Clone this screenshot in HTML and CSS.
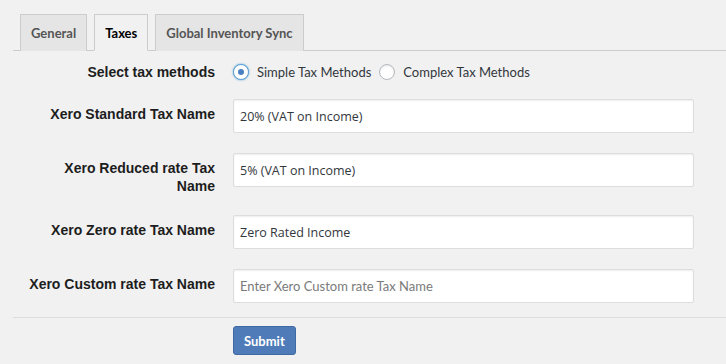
FILE: index.html
```html
<!DOCTYPE html>
<html lang="en">
<head>
    <meta charset="UTF-8">
    <title>Xero Settings - Taxes</title>
    <link rel="stylesheet" href="styles.css">
</head>
<body>
    <div class="wrap">
        <nav class="nav-tabs">
            <a class="nav-tab" href="#">General</a>
            <a class="nav-tab active" href="#">Taxes</a>
            <a class="nav-tab" href="#">Global Inventory Sync</a>
        </nav>

        <form class="settings-form">
            <div class="form-row radio-row">
                <div class="field-label">Select tax methods</div>
                <div class="radio-group">
                    <label class="radio"><input type="radio" name="tax_method" checked><span class="dot"></span>Simple Tax Methods</label>
                    <label class="radio"><input type="radio" name="tax_method"><span class="dot"></span>Complex Tax Methods</label>
                </div>
            </div>

            <div class="form-row">
                <label class="field-label" for="std">Xero Standard Tax Name</label>
                <input class="text-input" id="std" type="text" value="20% (VAT on Income)">
            </div>

            <div class="form-row">
                <label class="field-label" for="reduced">Xero Reduced rate Tax Name</label>
                <input class="text-input" id="reduced" type="text" value="5% (VAT on Income)">
            </div>

            <div class="form-row">
                <label class="field-label" for="zero">Xero Zero rate Tax Name</label>
                <input class="text-input" id="zero" type="text" value="Zero Rated Income">
            </div>

            <div class="form-row last">
                <label class="field-label" for="custom">Xero Custom rate Tax Name</label>
                <input class="text-input" id="custom" type="text" placeholder="Enter Xero Custom rate Tax Name">
            </div>

            <div class="submit-row">
                <button type="submit" class="button-primary">Submit</button>
            </div>
        </form>
    </div>
</body>
</html>
```

FILE: styles.css
```css
/* Settings page */
body {
    margin: 0;
    background: #f1f1f1;
    font-family: 'Lato', 'Liberation Sans', sans-serif;
    color: #23282d;
}

.wrap {
    margin-left: 13px;
}

/* Tabs */
.nav-tabs {
    display: flex;
    padding-top: 14px;
    border-bottom: 1px solid #ccc;
}

.nav-tab {
    display: block;
    margin-left: 7px;
    margin-bottom: -1px;
    padding: 6px 10px 5px;
    border: 1px solid #ccc;
    border-bottom: none;
    background: #e5e5e5;
    color: #555;
    font-size: 13px;
    font-weight: 700;
    line-height: 24px;
    text-decoration: none;
}

.nav-tab.active {
    background: #f1f1f1;
    color: #000;
    border-bottom: 1px solid #f1f1f1;
}

/* Form */
.settings-form {
    margin-right: 32px;
}

.form-row {
    display: grid;
    grid-template-columns: 210px 1fr;
    column-gap: 10px;
    margin-bottom: 20px;
}

.form-row.last {
    margin-bottom: 0;
}

.field-label {
    padding: 6px 8px 0 12px;
    font-family: 'Liberation Sans', Arial, sans-serif;
    font-size: 14px;
    font-weight: 700;
    line-height: 18px;
    text-align: right;
    color: #1d1d1d;
}

.radio-row {
    margin-top: 12px;
    margin-bottom: 18px;
}

.radio-row .field-label {
    padding-top: 0;
}

.radio-group {
    display: flex;
    align-items: center;
    gap: 8px;
    font-size: 13px;
    line-height: 18px;
    color: #32373c;
}

.radio {
    display: flex;
    align-items: center;
}

.radio input {
    display: none;
}

.radio .dot {
    width: 14px;
    height: 14px;
    margin-right: 8px;
    border: 1px solid #b4b9be;
    border-radius: 50%;
    background: #fff;
    box-shadow: inset 0 1px 2px rgba(0,0,0,0.1);
    display: flex;
    align-items: center;
    justify-content: center;
}

.radio input:checked + .dot {
    border-color: #5b9dd9;
    box-shadow: 0 0 2px rgba(30,140,190,0.8);
}

.radio input:checked + .dot::after {
    content: "";
    width: 6px;
    height: 6px;
    border-radius: 50%;
    background: #4a7fc1;
}

.text-input {
    height: 34px;
    box-sizing: border-box;
    margin: 0;
    padding: 0 6px;
    border: 1px solid #ddd;
    border-radius: 2px;
    background: #fff;
    box-shadow: inset 0 1px 2px rgba(0,0,0,0.07);
    font-family: 'Open Sans', sans-serif;
    font-size: 12.5px;
    color: #32373c;
    outline: none;
}

.text-input::placeholder {
    font-family: 'Lato', sans-serif;
    font-size: 13px;
    color: #7a7a7a;
}

.submit-row {
    margin-top: 14px;
    padding: 8px 0 0 220px;
    border-top: 1px solid #dcdcdc;
    margin-right: -32px;
}

.button-primary {
    height: 29px;
    padding: 0 10px;
    border: 1px solid #3e6aa3;
    border-radius: 3px;
    background: #4f7cb9;
    color: #fff;
    font-family: 'Lato', sans-serif;
    font-size: 13px;
    font-weight: 700;
    cursor: pointer;
}
```
